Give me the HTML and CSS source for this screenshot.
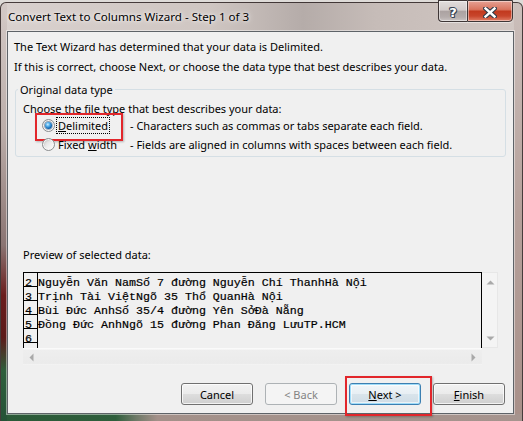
FILE: index.html
```html
<!DOCTYPE html>
<html>
<head>
<meta charset="utf-8">
<link rel="stylesheet" href="styles.css">
</head>
<body>
<div class="window">
  <div class="titlebar">
    <span class="title">Convert Text to Columns Wizard - Step 1 of 3</span>
  </div>
  <div class="caption-btns">
    <div class="cbtn help"><span class="qmark">?</span></div>
    <div class="cbtn close">
      <svg width="14" height="11" viewBox="0 0 14 11">
        <path d="M2.5 1.5 L11.5 9.5 M11.5 1.5 L2.5 9.5" stroke="#2f3a48" stroke-width="4.6" stroke-linecap="square" fill="none"/>
        <path d="M2.5 1.5 L11.5 9.5 M11.5 1.5 L2.5 9.5" stroke="#ffffff" stroke-width="2.4" stroke-linecap="square" fill="none"/>
      </svg>
    </div>
  </div>
  <div class="client">
    <p class="intro first">The Text Wizard has determined that your data is Delimited.</p>
    <p class="intro second">If this is correct, choose Next, or choose the data type that best describes your data.</p>
    <fieldset class="group">
      <legend>Original data type</legend>
      <div class="prompt">Choose the file type that best describes your data:</div>
      <div class="opt-row">
        <div class="opt marked">
          <span class="radio checked"></span>
          <span class="opt-text focused"><u>D</u>elimited</span>
        </div>
        <span class="desc">- Characters such as commas or tabs separate each field.</span>
      </div>
      <div class="opt-row">
        <div class="opt">
          <span class="radio"></span>
          <span class="opt-text">Fixed <u>w</u>idth</span>
        </div>
        <span class="desc">- Fields are aligned in columns with spaces between each field.</span>
      </div>
    </fieldset>
    <div class="preview-label">Preview of selected data:</div>
    <div class="preview">
      <div class="text-area">
        <div class="row"><span class="num">2</span><span class="cell">Nguyễn Văn NamSố 7 đường Nguyễn Chí ThanhHà Nội</span></div>
        <div class="row"><span class="num">3</span><span class="cell">Trịnh Tài ViệtNgõ 35 Thổ QuanHà Nội</span></div>
        <div class="row"><span class="num">4</span><span class="cell">Bùi Đức AnhSố 35/4 đường Yên SởĐà Nẵng</span></div>
        <div class="row"><span class="num">5</span><span class="cell">Đồng Đức AnhNgõ 15 đường Phan Đăng LưuTP.HCM</span></div>
        <div class="row"><span class="num">6</span><span class="cell"></span></div>
        <div class="row filler"><span class="num"></span></div>
      </div>
      <div class="vscroll">
        <svg width="9" height="5" viewBox="0 0 9 5"><polygon points="0.5,4.5 4.5,0.5 8.5,4.5" fill="#a9a9a9"/></svg>
        <svg width="9" height="5" viewBox="0 0 9 5"><polygon points="0.5,0.5 4.5,4.5 8.5,0.5" fill="#a9a9a9"/></svg>
      </div>
      <div class="hscroll">
        <svg width="5" height="9" viewBox="0 0 5 9"><polygon points="4.5,0.5 0.5,4.5 4.5,8.5" fill="#a9a9a9"/></svg>
        <svg width="5" height="9" viewBox="0 0 5 9"><polygon points="0.5,0.5 4.5,4.5 0.5,8.5" fill="#a9a9a9"/></svg>
      </div>
      <div class="corner"></div>
    </div>
    <div class="buttons">
      <div class="btn">Cancel</div>
      <div class="btn disabled">&lt; Back</div>
      <div class="btn default marked-btn"><span><u>N</u>ext &gt;</span></div>
      <div class="btn"><span><u>F</u>inish</span></div>
    </div>
  </div>
</div>
</body>
</html>
```

FILE: styles.css
```css
* { box-sizing: border-box; }
html, body { margin: 0; padding: 0; }
body {
  width: 523px;
  height: 421px;
  overflow: hidden;
  background: #dedbd8;
  font-family: "Noto Sans", "Open Sans", sans-serif;
  font-size: 11px;
  color: #000;
}
.window {
  position: relative;
  margin-top: 2px;
  height: 419px;
  width: 523px;
  border: 1px solid rgba(45, 35, 35, 0.85);
  border-bottom: none;
  border-radius: 6px 6px 0 0;
  display: flex;
  flex-direction: column;
  background:
    linear-gradient(to bottom, #d3c9c6 0%, #bcaeaa 30%, #8a7472 58%, #6a1d1d 70%, #5c1a1a 80%, #2e5e3c 88%, #255236 100%) no-repeat 0 0 / 6px 100%,
    linear-gradient(to right, #2a5937 0, #2f5f3c 22%, #6f7a68 26%, #a39089 30%, #a6948e 100%) no-repeat 0 100% / 100% 7px,
    linear-gradient(to bottom, #cbbfbb 0, #b6a19b 50%, #a89089 100%) no-repeat 100% 0 / 8px 100%,
    linear-gradient(90deg, #d9d1ce 0%, #cfc6c2 40%, #b5aca9 58%, #c6bcb8 72%, #d2c8c4 100%);
}
.titlebar {
  height: 28px;
  padding-left: 7px;
  display: flex;
  align-items: center;
}
.title {
  font-size: 11.6px;
  line-height: 16px;
  color: #000;
  text-shadow: 0 0 6px rgba(255,255,255,0.9), 0 0 3px rgba(255,255,255,0.8);
}
.caption-btns {
  position: absolute;
  top: -3px;
  left: 437px;
  display: flex;
}
.cbtn {
  height: 22px;
  display: flex;
  align-items: center;
  justify-content: center;
  padding-top: 2px;
  border: 1px solid #3e3636;
  box-shadow: inset 0 0 0 1px rgba(255,255,255,0.45), 0 1px 0 rgba(255,255,255,0.5);
}
.help {
  width: 29px;
  border-radius: 0 0 0 4px;
  border-right: none;
  background: linear-gradient(to bottom, #e2dddc 0%, #d2cbca 45%, #aca3a2 52%, #b4acab 80%, #cbc4c3 100%);
}
.qmark {
  font-family: "DejaVu Sans", sans-serif;
  font-weight: bold;
  font-size: 13px;
  line-height: 13px;
  color: #fff;
  text-shadow: -1px 0 #3b4656, 1px 0 #3b4656, 0 -1px #3b4656, 0 1px #3b4656, 1px 1px #3b4656, -1px -1px #3b4656;
}
.close {
  width: 46px;
  border-radius: 0 0 4px 0;
  background: linear-gradient(to bottom, #e6a194 0%, #d9755f 42%, #c23a1f 52%, #c8452b 75%, #e07f67 100%);
}
.client {
  flex: 1;
  margin: 0 8px 7px 6px;
  background: #f0f0f0;
  border: 1px solid #5e6368;
  box-shadow: 0 0 0 1px rgba(255,255,255,0.45);
  display: flex;
  flex-direction: column;
}
.intro {
  margin: 0;
  padding-left: 6px;
  line-height: 15px;
}
.intro.first { margin-top: 7px; }
.intro.second { margin-top: 5px; }
.group {
  margin: 8px 0 0 7px;
  width: 491px;
  padding: 0 0 2px 0;
  border: 1px solid #d5dfe5;
  border-radius: 3px;
  min-width: 0;
}
.group legend {
  margin-left: 2px;
  padding: 0 2px;
  line-height: 15px;
}
.prompt {
  margin: 4px 0 0 7px;
  line-height: 15px;
}
.opt-row {
  display: flex;
  align-items: center;
  height: 19px;
  margin-left: 7px;
}
.opt {
  position: relative;
  display: flex;
  align-items: center;
  width: 107px;
  height: 100%;
}
.marked::after {
  content: "";
  position: absolute;
  left: 12px;
  top: -3px;
  width: 84px;
  height: 24px;
  border: 2px solid #e2262b;
  box-shadow: 1px 1px 2px rgba(0,0,0,0.25);
}
.radio {
  width: 13px;
  height: 13px;
  margin-left: 19px;
  border-radius: 50%;
  border: 1px solid #8b8d8f;
  background: linear-gradient(135deg, #d6d6d6 0%, #f0f0f0 60%, #fcfcfc 100%);
  box-shadow: inset 0 0 0 1px #f6f6f6, inset 1px 1px 2px rgba(0,0,0,0.15);
  display: flex;
  align-items: center;
  justify-content: center;
}
.radio.checked::before {
  content: "";
  width: 7px;
  height: 7px;
  border-radius: 50%;
  background: radial-gradient(circle at 40% 35%, #d2f0ff 0, #56b2ee 30%, #1466b0 65%, #0b3f7a 100%);
  box-shadow: 0 0 0 1px rgba(20,60,110,0.35);
}
.opt-text {
  margin-left: 1px;
  padding: 0 1px;
  border: 1px solid transparent;
  line-height: 15px;
}
.opt-text.focused {
  border: 1px dotted #000;
}
.desc {
  line-height: 15px;
}
.preview-label {
  margin: 90px 0 0 15px;
  line-height: 15px;
}
.preview {
  margin: 10px 0 0 15px;
  display: grid;
  grid-template-columns: 459px 16px;
  grid-template-rows: 76px 17px;
}
.text-area {
  border: 1px solid #000;
  border-bottom: none;
  overflow: hidden;
  font-family: "Liberation Mono", "DejaVu Sans Mono", monospace;
  font-size: 11.67px;
  color: #000;
}
.row {
  display: flex;
  height: 14px;
  line-height: 20px;
  white-space: pre;
}
.row .num {
  width: 14px;
  flex: none;
  padding-left: 1px;
  border-right: 1px solid #000;
  border-bottom: 1px solid #000;
}
.row.filler { height: 6px; }
.row.filler .num { border-bottom: none; }
.cell { -webkit-text-stroke: 0.2px #000; }
.row .num { -webkit-text-stroke: 0.2px #000; }
.vscroll {
  display: flex;
  flex-direction: column;
  justify-content: space-between;
  align-items: center;
  padding: 7px 0 6px 1px;
  background: #f4f4f4;
  border: 1px solid #e7e7e7;
  border-left: none;
}
.hscroll {
  display: flex;
  justify-content: space-between;
  align-items: center;
  padding: 0 6px 0 6px;
  background: linear-gradient(to bottom, #fbfbfb 0, #eeeeee 1px, #ebebeb 90%, #f6f6f6 100%);
  border-top: 1px solid #fafafa;
}
.corner { background: #f0f0f0; }
.buttons {
  display: flex;
  justify-content: flex-end;
  gap: 12px;
  margin-top: 18px;
  padding-right: 8px;
}
.btn {
  position: relative;
  width: 72px;
  height: 22px;
  display: flex;
  align-items: center;
  justify-content: center;
  line-height: 15px;
  border: 1px solid #707070;
  border-radius: 3px;
  background: linear-gradient(to bottom, #f2f2f2 0%, #ebebeb 48%, #dddddd 52%, #cfcfcf 100%);
  box-shadow: inset 0 0 0 1px rgba(255,255,255,0.75);
}
.btn.disabled {
  border-color: #adb2b5;
  background: #f4f4f4;
  color: #838383;
  box-shadow: none;
}
.btn.default {
  border-color: #3c7fb1;
  background: linear-gradient(to bottom, #f1f6f9 0%, #e8eff4 48%, #d9e4eb 52%, #cfdce6 100%);
  box-shadow: inset 0 0 0 1px #9fdcf9, inset 0 0 0 2px rgba(255,255,255,0.6);
}
.marked-btn::after {
  content: "";
  position: absolute;
  left: -5px;
  top: -8px;
  width: 83px;
  height: 36px;
  border: 2px solid #e2262b;
  box-shadow: 1px 1px 2px rgba(0,0,0,0.25);
}
```
